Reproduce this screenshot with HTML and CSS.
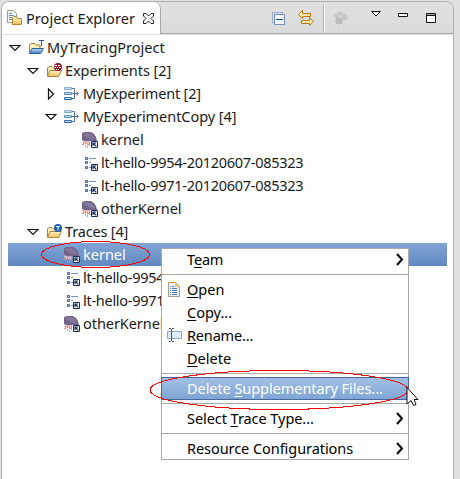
FILE: index.html
```html
<!DOCTYPE html>
<html lang="en">
<head>
<meta charset="utf-8">
<title>Project Explorer</title>
<link rel="stylesheet" href="styles.css">
</head>
<body>
<svg class="defs" aria-hidden="true">
  <defs>
    <linearGradient id="gold" x1="0" y1="0" x2="0" y2="1"><stop offset="0" stop-color="#fff3c4"/><stop offset="1" stop-color="#edbf5c"/></linearGradient>
    <linearGradient id="blue" x1="0" y1="0" x2="0" y2="1"><stop offset="0" stop-color="#bcdcfa"/><stop offset="1" stop-color="#4179c4"/></linearGradient>
    <linearGradient id="bar" x1="0" y1="0" x2="0" y2="1"><stop offset="0" stop-color="#8fb6dc"/><stop offset="1" stop-color="#2564a6"/></linearGradient>
    <symbol id="open" viewBox="0 0 12 8"><path d="M1 1.5H11L6 6.5Z" fill="#fff" stroke="#111" stroke-width="1.2"/></symbol>
    <symbol id="closed" viewBox="0 0 8 12"><path d="M1.5 1V11L6.5 6Z" fill="#fff" stroke="#111" stroke-width="1.2"/></symbol>
    <symbol id="folder" viewBox="0 0 16 16"><path d="M1.500 13V5L3 3.500H6L7.500 5H12.500V8" fill="#fff0bc" stroke="#b58036"/><path d="M1.500 13.500L4 7.500H15.500L12.500 13.500Z" fill="url(#gold)" stroke="#b58036"/></symbol>
    <symbol id="link" viewBox="0 0 7 7"><path d="M.5 .5H6.500V6.500H.5Z" fill="#fff" stroke="#162d59"/><path d="M2 5V2H5M2 2L5.300 5.300" fill="none" stroke="#162d59" stroke-width="1.200"/></symbol>
    <symbol id="kernel" viewBox="0 0 16 16"><path d="M0 1L3 0H9L12 2L14 5L15 9H9L7 9.500H3L0 8Z" fill="#716488"/><path d="M0 2L5 1L10 2L13 6L11 8L6 6Z" fill="#85779c"/><path d="M0 8L3 9.500H8V12H1Z" fill="#f6c4c0"/><path d="M1.500 10V12M3.500 10V15M5.500 11V16M7.500 10V14M0 12.500H2M6 12.500H8" stroke="#df8c8c" stroke-dasharray="2 1"/><use href="#link" x="9" y="9" width="7" height="7"/></symbol>
    <symbol id="trace" viewBox="0 0 16 16"><path d="M3 2H6V5H3ZM3 6H6V9H3ZM3 11H6V14H3Z" fill="#5878ad"/><path d="M4 3.500H5M4 7.500H5M4 12.500H5" stroke="#9bb4d9"/><path d="M7 3.500H14M7 7.500H9M7 12.500H9" stroke="#7590bd"/><use href="#link" x="9" y="9" width="7" height="7"/></symbol>
    <symbol id="experiment" viewBox="0 0 16 16"><path d="M.5 1.500H7.500V3.500H.5ZM.5 6.500H7.500V8.500H.5ZM.5 11.500H7.500V13.500H.5Z" fill="#c0def4" stroke="url(#bar)"/><path d="M8 2.500H10.500V12.500H8M8 7.500H14M12.500 5.500L14.500 7.500L12.500 9.500" fill="none" stroke="#546f9c"/></symbol>
    <symbol id="page" viewBox="0 0 12 15"><path d="M.5 .5H7.500L11.500 4.500V14.500H.5Z" fill="#edf4ff" stroke="#a3a18e"/><path d="M.5 .5H7.500L11.500 4.500" fill="none" stroke="#c6a34e"/><path d="M7 1V5H11Z" fill="#e8c46f"/><path d="M2 4.500H3M4 4.500H6M2 6.500H3M4 6.500H9M2 8.500H3M4 8.500H9M2 10.500H3M4 10.500H9M2 12.500H3M4 12.500H9" stroke="#557bb4"/></symbol>
    <symbol id="more" viewBox="0 0 8 14"><path d="M1 1L6 6.500L1 12" fill="none" stroke="#080808" stroke-width="2"/></symbol>
  </defs>
</svg>
<main class="panel">
  <header class="header">
    <div class="tab">
      <svg class="tab-icon" viewBox="0 0 16 16"><path d="M.5 .5H6.500L9.500 3.500V12.500H.5Z" fill="#f2f5fb" stroke="#a29a7c"/><path d="M2 3.500H5M2 5.500H7M2 7.500H5M2 9.500H5" stroke="#7187aa"/><path d="M5.500 14.500V7.500L6.500 6.500H9.500L10.500 8.500H14.500V14.500Z" fill="url(#gold)" stroke="#b88536"/></svg>
      <span class="title">Project Explorer</span>
      <svg class="close" viewBox="0 0 11 11"><path d="M.5 .5H3L5.500 3L8 .5H10.500V3L8 5.500L10.500 8V10.500H8L5.500 8L3 10.500H.5V8L3 5.500L.5 3Z" fill="#fff" stroke="#222"/></svg>
    </div>
    <svg class="tools" viewBox="0 0 292 31">
      <g shape-rendering="crispEdges"><path d="M111.500 10.500H121.500V20.500H111.500Z" fill="#d5e1f4" stroke="#9caed1"/><path d="M113.500 12.500H123.500V22.500H113.500Z" fill="#f5faff" stroke="#7690b9"/><path d="M115 17.500H122" stroke="#124c8b"/></g>
      <path d="M137.500 12.500L141.500 8.500V11.500H149.500V14.500H141.500V16.500ZM152.500 19.500L148.500 15.500V18.500H140.500V21.500H148.500V23.500Z" fill="#ffedac" stroke="#ba7b0c"/>
      <path d="M162.500 2V30" stroke="#b5b5b5"/><path d="M163.500 2V30" stroke="#fff"/>
      <g fill="#c8c8c8"><circle cx="175.500" cy="13.500" r="2.500"/><circle cx="179.500" cy="11.500" r="2.200"/><circle cx="183.500" cy="15" r="3.200"/><circle cx="178" cy="19" r="3.600" fill="#bbb"/></g>
      <path d="M210.500 9.500H219.500L215 14Z" fill="#fff" stroke="#111"/>
      <path d="M237.500 11.500H246.500V14.500H237.500ZM265.500 11.500H274.500V20.500H265.500Z" fill="#fff" stroke="#111"/><path d="M266 12.500H274" stroke="#aaa"/><path d="M266 13.500H274" stroke="#111"/>
    </svg>
  </header>
  <section class="tree">
    <div class="row l0"><svg class="twisty"><use href="#open"/></svg><svg class="icon" viewBox="0 0 16 16"><path d="M1.500 12V5L3 3.500H7L8 5H12V8" fill="#fff0bc" stroke="#b58036"/><path d="M1.500 13.500L4 8.500H15.500L12.500 13.500Z" fill="url(#blue)" stroke="#32609f"/><path d="M11 .5H16M13.500 .5V6" stroke="#22579b"/></svg><span>MyTracingProject</span></div>
    <div class="row l1"><svg class="twisty"><use href="#open"/></svg><svg class="icon" viewBox="0 0 16 16"><use href="#folder"/><circle cx="12" cy="4" r="4" fill="#8b1830"/><path d="M9 2.500H11M12 2.500H14M8.500 4.500H10M11 4.500H12M13 4.500H15M10 6.500H11M12 6.500H13" stroke="#fff"/></svg><span class="snug">Experiments [2]</span></div>
    <div class="row l2"><svg class="twisty right"><use href="#closed"/></svg><svg class="icon"><use href="#experiment"/></svg><span class="tight">MyExperiment [2]</span></div>
    <div class="row l2"><svg class="twisty"><use href="#open"/></svg><svg class="icon"><use href="#experiment"/></svg><span class="snug">MyExperimentCopy [4]</span></div>
    <div class="row l3"><svg class="icon"><use href="#kernel"/></svg><span>kernel</span></div>
    <div class="row l3"><svg class="icon"><use href="#trace"/></svg><span class="trace-name">lt-hello-9954-20120607-085323</span></div>
    <div class="row l3"><svg class="icon"><use href="#trace"/></svg><span class="trace-name">lt-hello-9971-20120607-085323</span></div>
    <div class="row l3"><svg class="icon"><use href="#kernel"/></svg><span class="snug">otherKernel</span></div>
    <div class="row l1"><svg class="twisty"><use href="#open"/></svg><svg class="icon" viewBox="0 0 16 16"><use href="#folder"/><circle cx="12" cy="4" r="4" fill="#1761b0"/><path d="M10 2.500H14M12 2.500V6.500" stroke="#fff"/></svg><span class="tight">Traces [4]</span></div>
    <div class="row l2b selected"><svg class="icon"><use href="#kernel"/></svg><span>kernel</span></div>
    <div class="row l2b"><svg class="icon"><use href="#trace"/></svg><span class="trace-name">lt-hello-9954</span></div>
    <div class="row l2b"><svg class="icon"><use href="#trace"/></svg><span class="trace-name">lt-hello-9971</span></div>
    <div class="row l2b"><svg class="icon"><use href="#kernel"/></svg><span class="snug">otherKernel</span></div>
  </section>
</main>
<nav class="menu">
  <div class="item"><span class="tight">T<u>e</u>am</span><svg class="more"><use href="#more"/></svg></div>
  <div class="sep"></div>
  <div class="item"><svg class="page"><use href="#page"/></svg><span><u>O</u>pen</span></div>
  <div class="item"><span><u>C</u>opy...</span></div>
  <div class="item"><svg class="rename" viewBox="0 0 16 15"><path d="M1.500 3.500H15.500V10.500H1.500Z" fill="#dcecff" stroke="#8fa7c8"/><path d="M5.500 1V13M3 .5H5M6 .5H8M3 13.500H5M6 13.500H8" stroke="#35598d"/></svg><span class="tight"><u>R</u>ename...</span></div>
  <div class="item"><span><u>D</u>elete</span></div>
  <div class="sep"></div>
  <div class="item active"><span class="snug">Delete <u>S</u>upplementary Files...</span></div>
  <div class="sep"></div>
  <div class="item"><span class="snug">Select <u>T</u>race Type...</span><svg class="more"><use href="#more"/></svg></div>
  <div class="sep"></div>
  <div class="item"><span class="snug">Resource Configurations</span><svg class="more"><use href="#more"/></svg></div>
</nav>
<svg class="marks" viewBox="0 0 460 479"><g fill="none" stroke="#f00" shape-rendering="crispEdges"><ellipse cx="95.500" cy="254.500" rx="54" ry="13"/><ellipse cx="279" cy="390" rx="129" ry="19.500"/></g><path d="M407 387.500V404L411 400.500L413.500 405.500L416 404.500L414 399.500H418Z" fill="#fff" stroke="#111"/></svg>
</body>
</html>
```
FILE: styles.css
```css
* { box-sizing: border-box; }
body { margin: 0; width: 460px; height: 479px; overflow: hidden; background: #e0e0e0; color: #1a1a1a; font: 14.5px/23px "Noto Sans", sans-serif; }
svg { display: block; flex: none; }
.defs { position: absolute; width: 0; height: 0; }
.panel { margin: 1px 0 0 1px; width: 453px; height: 478px; border: 1px solid #b0b0b0; border-bottom: 0; border-radius: 8px 8px 0 0; background: #fff; overflow: hidden; }
.header { display: flex; height: 33px; background: linear-gradient(#e1e1e1, #dadada); border-bottom: 1px solid #dedede; }
.tab { display: flex; align-items: center; width: 159px; height: 32px; padding-left: 5px; background: #fff; border-right: 1px solid #aaa; border-radius: 0 7px 0 0; }
.tab-icon { width: 16px; height: 16px; }
.title { width: 110px; margin-left: 3px; white-space: nowrap; letter-spacing: .05px; }
.close { width: 11px; height: 11px; margin-left: 7px; }
.tools { width: 292px; height: 32px; border-bottom: 1px solid #aaa; }
.tree { padding: 1px 6px 0; }
.row { display: flex; align-items: center; height: 23px; white-space: nowrap; }
.icon { width: 16px; height: 16px; margin-right: 3px; }
.twisty { width: 12px; height: 8px; margin-right: 7px; }
.twisty.right { width: 8px; height: 12px; margin: 0 9px 0 2px; }
.l0 { padding-left: 1px; }
.l1 { padding-left: 19px; }
.l2 { padding-left: 37px; }
.l2b { padding-left: 56px; }
.l3 { padding-left: 74px; }
.snug { letter-spacing: -.06px; }
.tight { letter-spacing: -.17px; }
.trace-name { letter-spacing: -.28px; }
.selected { color: #fff; background: linear-gradient(#81a4d5, #6089c1); }
.menu { position: absolute; left: 161px; top: 248px; width: 248px; height: 212px; background: #fff; box-shadow: inset 0 0 0 1px #aaa; color: #000; }
.item { display: flex; align-items: center; height: 23px; padding-left: 26px; white-space: nowrap; }
.item u { text-decoration-thickness: 1px; text-underline-offset: 2px; }
.sep { height: 7px; padding-top: 3px; }
.sep::before { content: ""; display: block; height: 1px; background: #aaa; }
.more { width: 8px; height: 14px; margin: 0 5px 0 auto; }
.page { width: 12px; height: 15px; margin: 0 7px 0 -19px; }
.rename { width: 16px; height: 15px; margin: 0 5px 0 -21px; }
.active { color: #fff; background: linear-gradient(#a2c0e6, #7fa5d5); border: 1px solid #47679a; padding-left: 25px; }
.marks { position: absolute; left: 0; top: 0; width: 460px; height: 479px; }
```
